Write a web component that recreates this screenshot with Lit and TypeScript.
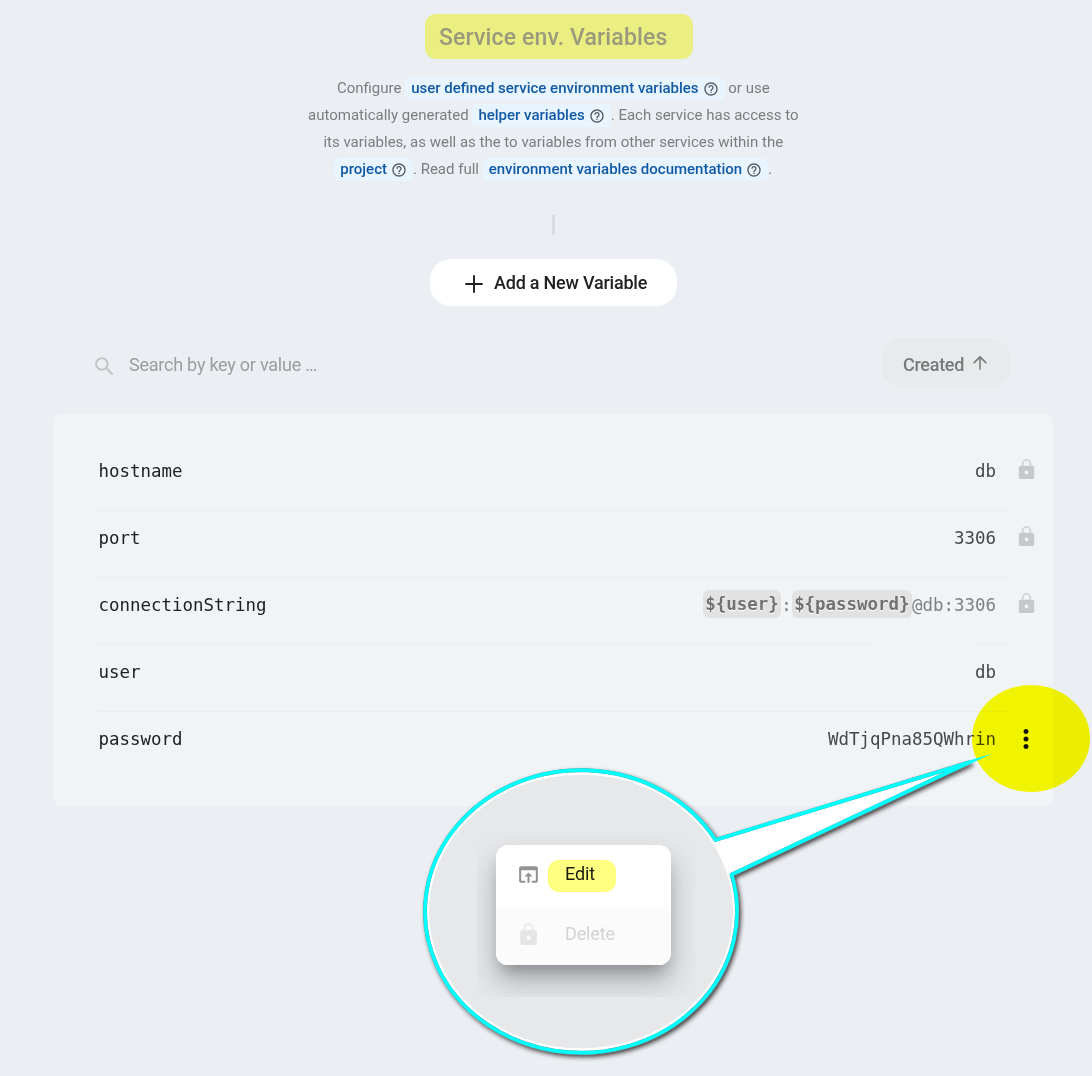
import { LitElement, html, svg, css, nothing } from "lit";
import { customElement, property } from "lit/decorators.js";

const ICONS: Record<string, unknown> = {
  help: svg`<path d="M11 18h2v-2h-2v2zm1-16C6.48 2 2 6.48 2 12s4.48 10 10 10 10-4.48 10-10S17.52 2 12 2zm0 18c-4.41 0-8-3.59-8-8s3.59-8 8-8 8 3.59 8 8-3.59 8-8 8zm0-14c-2.21 0-4 1.79-4 4h2c0-1.1.9-2 2-2s2 .9 2 2c0 2-3 1.75-3 5h2c0-2.25 3-2.5 3-5 0-2.21-1.79-4-4-4z"/>`,
  plus: svg`<path d="M12 2.5v19M2.5 12h19" fill="none" stroke="currentColor" stroke-width="2.1"/>`,
  search: svg`<path d="M15.5 14h-.79l-.28-.27C15.41 12.59 16 11.11 16 9.5 16 5.91 13.09 3 9.5 3S3 5.91 3 9.5 5.91 16 9.5 16c1.61 0 3.09-.59 4.23-1.57l.27.28v.79l5 4.99L20.49 19l-4.99-5zm-6 0C7.01 14 5 11.99 5 9.5S7.01 5 9.5 5 14 7.01 14 9.5 11.99 14 9.5 14z"/>`,
  up: svg`<path d="M12 21V4M3.6 12.2L12 3.8l8.4 8.4" fill="none" stroke="currentColor" stroke-width="2"/>`,
  lock: svg`<path d="M8 8.5V6a4 4 0 0 1 8 0v2.5" fill="none" stroke="currentColor" stroke-width="1.9" opacity=".75"/><path fill-rule="evenodd" d="M18 8H6c-1.1 0-2 .9-2 2v10c0 1.1.9 2 2 2h12c1.1 0 2-.9 2-2V10c0-1.1-.9-2-2-2zm-6 9c-1.1 0-2-.9-2-2s.9-2 2-2 2 .9 2 2-.9 2-2 2z"/>`,
  more: svg`<path d="M12 8c1.1 0 2-.9 2-2s-.9-2-2-2-2 .9-2 2 .9 2 2 2zm0 2c-1.1 0-2 .9-2 2s.9 2 2 2 2-.9 2-2-.9-2-2-2zm0 6c-1.1 0-2 .9-2 2s.9 2 2 2 2-.9 2-2-.9-2-2-2z"/>`,
  open: svg`<path d="M19 4H5c-1.11 0-2 .9-2 2v12c0 1.1.89 2 2 2h4v-2H5V8h14v10h-4v2h4c1.1 0 2-.9 2-2V6c0-1.1-.89-2-2-2zm-7 6l-4 4h3v6h2v-6h3l-4-4z"/>`,
};

@customElement("ui-icon")
export class UiIcon extends LitElement {
  @property() name = "";
  static styles = css`
    :host { display: inline-block; flex: none; }
    svg { display: block; width: 100%; height: 100%; fill: currentColor; }
  `;
  render() {
    return html`<svg viewBox="0 0 24 24" aria-hidden="true">${ICONS[this.name]}</svg>`;
  }
}

interface Variable {
  key: string;
  value: unknown;
  icon?: string;
  rule?: string;
  muted?: boolean;
}

const VARIABLES: Variable[] = [
  { key: "hostname", value: "db", icon: "lock", rule: "full" },
  { key: "port", value: "3306", icon: "lock", rule: "full" },
  {
    key: "connectionString",
    value: html`<span class="ref">\${user}</span>:<span class="ref">\${password}</span>@db:3306`,
    icon: "lock", rule: "gap", muted: true,
  },
  { key: "user", value: "db", rule: "full" },
  { key: "password", value: "WdTjqPna85QWhrin", icon: "more" },
];

@customElement("app-root")
export class AppRoot extends LitElement {
  static styles = css`
    :host { display: block; }
    * { box-sizing: border-box; }
    .page {
      position: relative; height: 1076px; overflow: hidden;
      padding: 14px 39px 0 53px; background: #ebeef3;
      font-family: Roboto, "Liberation Sans", sans-serif; color: #212121;
      display: flex; flex-direction: column; align-items: center;
    }
    .title {
      margin: 0 0 0 12px; width: 268px; height: 45px; padding-left: 14px;
      border-radius: 11px; background: #ebee81; color: #9a9a7c;
      font-size: 23px; font-weight: 500; line-height: 48px; letter-spacing: .15px; white-space: nowrap;
    }
    .intro { margin: 16px 0 0 .5px; font-size: 15px; line-height: 27px; color: #7b7d80; text-align: center; }
    .intro div { white-space: nowrap; }
    .chip {
      display: inline-flex; align-items: center; height: 23px; padding: 0 5px 0 6px;
      border-radius: 6px; background: #e8f5fe; color: #1259a5; font-weight: 500; line-height: 23px;
    }
    .chip ui-icon { width: 16px; height: 16px; margin: 0 1px 0 4px; color: #55595e; }
    .tick { width: 3px; height: 20px; margin-top: 32px; background: #d8dbdf; }
    .add {
      margin-top: 24px; width: 247px; height: 47px; border-radius: 21px; background: #fff;
      display: flex; align-items: center; padding-left: 33px;
      font-size: 18px; font-weight: 500; letter-spacing: -.22px; white-space: nowrap;
    }
    .add ui-icon { width: 22px; height: 22px; margin-right: 9.5px; position: relative; top: 1.5px; }
    .tools { width: 100%; height: 50px; margin-top: 32px; padding: 0 42px 0 38.5px; display: flex; justify-content: space-between; align-items: center; }
    .search { display: flex; align-items: center; padding-top: 2px; font-size: 18px; letter-spacing: -.235px; color: #9b9d9f; }
    .search ui-icon { width: 25px; height: 25px; margin-right: 12.5px; color: #c3c5c6; position: relative; top: 2px; }
    .sort {
      width: 130px; height: 50px; border-radius: 22px; background: #e9eaeb; color: #77797a;
      display: flex; align-items: center; padding: 3px 0 0 22px; font-size: 18px; font-weight: 500; letter-spacing: -.29px;
    }
    .sort ui-icon { width: 18px; height: 18px; margin-left: 7px; position: relative; top: -2px; }
    .card { width: 100%; height: 392px; margin-top: 26px; padding: 30px 0 0 45px; border-radius: 9px; background: #f0f4f7; }
    .row { display: flex; height: 67px; }
    .cell {
      width: 910px; padding: 0 12px 14px .5px; display: flex; align-items: center; justify-content: space-between;
      font-family: "DejaVu Sans Mono", monospace; font-size: 17.44px; white-space: nowrap;
    }
    .full { background: linear-gradient(#ebecec, #ebecec) 0 100% / 100% 1px no-repeat; }
    .gap { background: linear-gradient(90deg, #ebecec 778px, transparent 778px 876px, #ebecec 876px) 0 100% / 100% 1px no-repeat; }
    .value { color: #454749; }
    .muted { color: #7e8082; padding-top: 1px; }
    .ref {
      display: inline-block; height: 28px; line-height: 28px; padding: 0 2.4px; border-radius: 6px;
      background: #e2e2e2; color: #707172; font-weight: 700; text-shadow: 0 1px 1px #fff; vertical-align: middle; margin-top: -3px;
    }
    .side { width: 36px; display: flex; justify-content: center; align-items: center; padding-bottom: 16px; color: #c7c8c9; }
    .side ui-icon { width: 23px; height: 23px; }
    .side .more { width: 30px; height: 30px; color: #111; margin-bottom: -2px; }
    .spot {
      position: absolute; left: 972px; top: 685px; width: 118px; height: 107px;
      border-radius: 50%; background: #ff0; mix-blend-mode: multiply;
    }
    .lens { position: absolute; left: 0; top: 0; width: 1092px; height: 1076px; }
    .menu {
      position: absolute; left: 496px; top: 845px; width: 175px; height: 120px; border-radius: 12px;
      background: #fff; overflow: hidden; font-size: 18px; letter-spacing: -.12px;
    }
    .shade { position: absolute; left: 477px; top: 832px; width: 218px; height: 165px; overflow: hidden; }
    .cast { margin: 13px 0 0 19px; width: 175px; height: 120px; border-radius: 12px; box-shadow: 0 11px 16px -7px rgba(0,0,0,.28), 0 16px 28px 2px rgba(40,50,60,.28); }
    .item { display: flex; align-items: center; height: 60px; padding: 0 0 2px 20px; }
    .item ui-icon { width: 25px; height: 25px; margin: 1px 7px 0 0; color: #929292; }
    .off { background: #fbfbfb; color: #d2d2d2; }
    .off ui-icon { color: #e5e5e5; margin-top: 0; }
    .label { padding: 0 17px; height: 32px; line-height: 28px; border-radius: 11px; position: relative; top: 2px; }
    .mark { background: #ffff80; color: #1c1c10; width: 68px; }
  `;

  chip(text: string) {
    return html`<span class="chip">${text}<ui-icon name="help"></ui-icon></span>`;
  }

  row(v: Variable) {
    return html`<div class="row">
      <div class="cell ${v.rule ?? ""}">
        <span>${v.key}</span><span class="value ${v.muted ? "muted" : ""}">${v.value}</span>
      </div>
      <div class="side">${v.icon ? html`<ui-icon class=${v.icon} name=${v.icon}></ui-icon>` : nothing}</div>
    </div>`;
  }

  render() {
    const balloon = "M715.5 839.9A156 141.3 0 1 0 731.6 874.6L969 762.5Z";
    return html`<main class="page">
      <h1 class="title">Service env. Variables</h1>
      <div class="intro">
        <div>Configure ${this.chip("user defined service environment variables")} or use</div>
        <div>automatically generated ${this.chip("helper variables")}. Each service has access to</div>
        <div>its variables, as well as the to variables from other services within the</div>
        <div>${this.chip("project")}. Read full ${this.chip("environment variables documentation")}.</div>
      </div>
      <div class="tick"></div>
      <div class="add"><ui-icon name="plus"></ui-icon>Add a New Variable</div>
      <div class="tools">
        <div class="search"><ui-icon name="search"></ui-icon>Search by key or value …</div>
        <div class="sort">Created<ui-icon name="up"></ui-icon></div>
      </div>
      <section class="card">${VARIABLES.map((v) => this.row(v))}</section>

      <div class="spot"></div>
      <svg class="lens" viewBox="0 0 1092 1076">
        <defs>
          <filter id="drop" x="-10%" y="-10%" width="120%" height="120%">
            <feDropShadow dx="2" dy="2.5" stdDeviation="2.2" flood-color="#201515" flood-opacity=".8"/>
          </filter>
        </defs>
        <path filter="url(#drop)" d=${balloon} fill="#fff" stroke="#5f9c9c" stroke-width="4" stroke-linejoin="round"/>
        <path d=${balloon} fill="none" stroke="#00ffff" stroke-width="3.5" stroke-miterlimit="30"/>
        <ellipse cx="581" cy="911.5" rx="152" ry="136.8" fill="#e7e8ea"/>
      </svg>
      <div class="shade"><div class="cast"></div></div>
      <div class="menu">
        <div class="item"><ui-icon name="open"></ui-icon><span class="label mark">Edit</span></div>
        <div class="item off"><ui-icon name="lock"></ui-icon><span class="label">Delete</span></div>
      </div>
    </main>`;
  }
}
